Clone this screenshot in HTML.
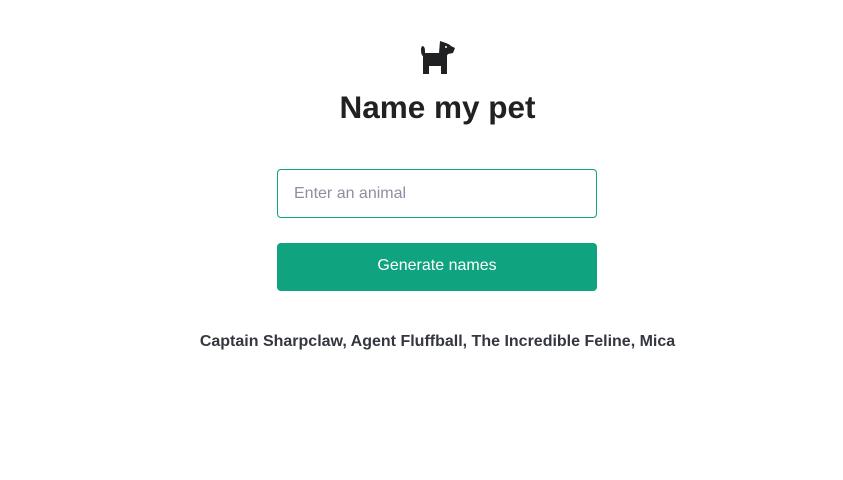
<!DOCTYPE html>
<html><head><style>
body{margin:0;width:843px;height:480px;background:#fff;font-family:"Liberation Sans",sans-serif;position:relative;overflow:hidden}
h1{position:absolute;top:88px;left:0;width:875px;text-align:center;margin:0;font-size:31.5px;font-weight:bold;color:#202123;line-height:38px}
.inp{position:absolute;left:277px;top:169px;width:318px;height:47px;border:1px solid #10a37f;border-radius:4px;box-sizing:content-box}
.inp span{position:absolute;left:16px;top:15px;font-size:16px;color:#8e8ea0}
.btn{position:absolute;left:277px;top:243px;width:320px;height:48px;background:#10a37f;border-radius:4px;color:#fff;font-size:16px;text-align:center;line-height:46px}
.res{position:absolute;top:333px;left:0;width:875px;text-align:center;font-size:16px;font-weight:bold;color:#353740}
</style></head><body>
<svg style="position:absolute;left:418px;top:40px" width="38" height="36" viewBox="418 40 38 36">
<path fill="#202123" d="M421 50 Q421 46 423 46 Q425 47 425 51 L425 53 L447 53 L447 74 L441 74 L441 66 L429 66 L429 74 L423 74 L423 56 Q421 55 421 50Z"/>
<path fill="#202123" d="M440 41 L446 43 Q449 44 451 46 L455 48 L453 53 L448 54 L446 57 L439 53 Z"/>
<circle cx="446" cy="47" r="1" fill="#fff"/>
</svg>
<h1>Name my pet</h1>
<div class="inp"><span>Enter an animal</span></div>
<div class="btn">Generate names</div>
<div class="res">Captain Sharpclaw, Agent Fluffball, The Incredible Feline, Mica</div>
</body></html>
